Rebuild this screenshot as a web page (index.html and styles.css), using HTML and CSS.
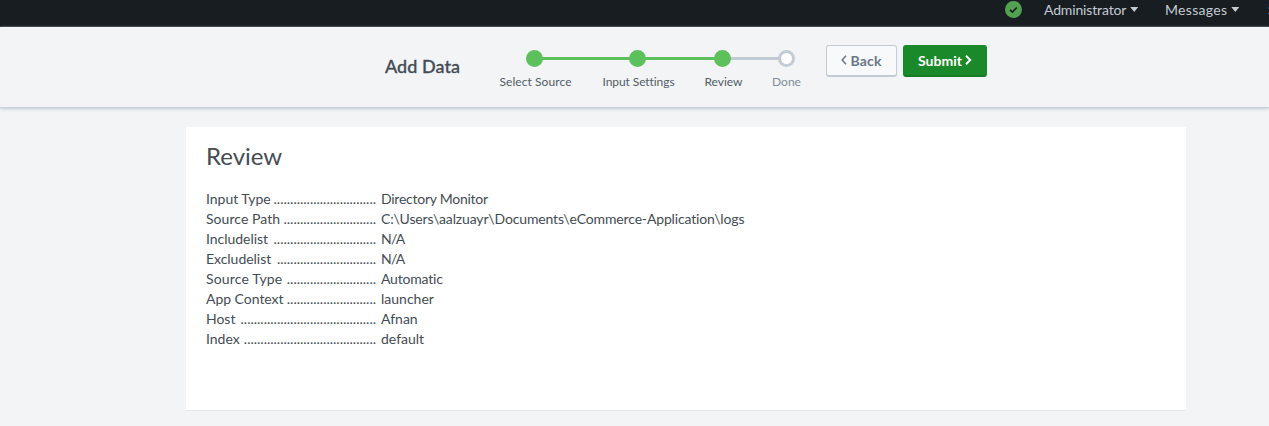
FILE: index.html
```html
<!DOCTYPE html>
<html lang="en">
<head>
<meta charset="utf-8">
<title>Add Data</title>
<link rel="stylesheet" href="styles.css">
</head>
<body>
<nav class="topbar">
  <svg class="health" width="17" height="17" viewBox="0 0 17 17"><circle cx="8.5" cy="8.5" r="8.5" fill="#53a051"/><path d="M5 8.8l2.4 2.3 4.4-4.6" fill="none" stroke="#171d21" stroke-width="1.7"/></svg>
  <a class="menu admin"><span>Administrator</span><i class="caret"></i></a>
  <a class="menu messages"><span>Messages</span><i class="caret"></i></a>
  <a class="menu settings"><span>Settings</span></a>
</nav>
<header class="wizard">
  <h1 class="title">Add Data</h1>
  <ol class="steps">
    <li class="step s1 done"><i class="dot"></i><span>Select Source</span></li>
    <li class="step s2 done"><i class="dot"></i><span>Input Settings</span></li>
    <li class="step s3 done"><i class="dot"></i><span>Review</span></li>
    <li class="step s4"><i class="dot"></i><span>Done</span></li>
  </ol>
  <button class="btn back"><svg width="6" height="10" viewBox="0 0 6 10"><path d="M5 .8L1.200 5 5 9.200" fill="none" stroke="currentColor" stroke-width="1.500"/></svg><span>Back</span></button>
  <button class="btn submit"><span>Submit</span><svg width="7" height="10" viewBox="0 0 7 10"><path d="M1 .8L5.200 5 1 9.200" fill="none" stroke="currentColor" stroke-width="2"/></svg></button>
</header>
<main class="card">
  <h2 class="heading">Review</h2>
  <dl class="list">
    <dt><span>Input Type</span><i>...............................</i></dt><dd class="monitor">Directory Monitor</dd>
    <dt><span class="path-label">Source Path</span><i>............................</i></dt><dd class="path">C:\Users\aalzuayr\Documents\eCommerce-Application\logs</dd>
    <dt><span>Includelist</span><i>...............................</i></dt><dd class="na">N/A</dd>
    <dt><span>Excludelist</span><i>..............................</i></dt><dd class="na">N/A</dd>
    <dt><span class="type-label">Source Type</span><i>...........................</i></dt><dd class="automatic">Automatic</dd>
    <dt><span>App Context</span><i>...........................</i></dt><dd>launcher</dd>
    <dt><span>Host</span><i>.........................................</i></dt><dd>Afnan</dd>
    <dt><span>Index</span><i>........................................</i></dt><dd>default</dd>
  </dl>
</main>
</body>
</html>
```
FILE: styles.css
```css
* { box-sizing: border-box; }
body { margin: 0; height: 426px; overflow: hidden; background: #f2f4f5; font-family: Lato, sans-serif; font-size: 14px; font-variant-ligatures: none; color: #444c55; }
.topbar { height: 27px; background: #171d21; border-bottom: 1px solid #2b3033; display: flex; padding-left: 1005px; color: #c3cbd4; overflow: hidden; white-space: nowrap; }
.health { margin-top: 1px; flex: none; }
.menu { display: flex; flex: none; line-height: 19px; }
.admin { margin-left: 22px; width: 121px; letter-spacing: -.15px; }
.messages { width: 103px; letter-spacing: .3px; }
.caret { width: 8px; height: 5px; margin: 7px 0 0 4px; background: currentColor; clip-path: polygon(0 0, 100% 0, 50% 100%); }
.wizard { position: relative; z-index: 0; height: 81px; background: #f2f4f5; border-bottom: 1px solid #c9d0d8; box-shadow: 0 1px 3px #c3cbd4; display: flex; padding-left: 385px; }
.title { margin: 27px 0 0; width: 114px; font-size: 18px; line-height: 24px; font-weight: 500; -webkit-text-stroke: .3px; letter-spacing: .05px; }
.steps { list-style: none; display: flex; margin: 23px 0 0; padding: 0; width: 327px; }
.step { display: flex; flex-direction: column; align-items: center; flex: none; font-size: 12px; line-height: 16px; color: #5c6773; white-space: nowrap; position: relative; }
.step.done { color: #535c67; }
.s1 { width: 73px; margin-right: 30px; letter-spacing: .08px; }
.s2 { width: 73px; margin-right: 29px; letter-spacing: -.08px; }
.s3 { width: 39px; margin-right: 29px; }
.s4 { width: 29px; }
.step.s4 { color: #818d99; }
.dot { width: 17px; height: 17px; border-radius: 50%; border: 3px solid #c3cbd4; background: #fff; margin-bottom: 7px; }
.done .dot { border-color: #5cc05c; background: #5cc05c; margin-right: 2px; }
.step::before { content: ""; position: absolute; top: 7px; left: calc(50% + 6px); height: 3px; background: #5cc05c; }
.s1::before { width: 90px; }
.s2::before { width: 72px; }
.step.s3::before { width: 51px; background: #c3cbd4; z-index: -1; }
.s4::before { display: none; }
.btn { margin: 18px 0 0; padding: 0 0 1px; height: 32px; border-radius: 3px; font: 700 14px Lato, sans-serif; display: flex; align-items: center; justify-content: center; gap: 3px; }
.back { width: 71px; border: 1px solid #c3cbd4; border-bottom-width: 2px; background: #f7f9fa; color: #6b7785; letter-spacing: .15px; }
.submit { width: 84px; margin-left: 6px; border: 1px solid #1a8929; border-bottom: 2px solid #157a23; background: #1a8929; color: #fff; }
.card { width: 1000px; height: 284px; margin: 19px 0 0 186px; padding: 14px 20px; background: #fff; border-bottom: 1px solid #e1e6eb; }
.heading { margin: 0; font-size: 24px; line-height: 30px; font-weight: 400; }
.list { margin: 18px 0 0; display: grid; grid-template-columns: 170px 1fr; column-gap: 5px; grid-auto-rows: 20px; line-height: 20px; }
dt { display: flex; justify-content: space-between; white-space: nowrap; letter-spacing: -.03px; }
dt i { font-style: normal; letter-spacing: 0; }
dd { margin: 0; white-space: nowrap; justify-self: start; }
.type-label { letter-spacing: .15px; }
.path-label { letter-spacing: .05px; }
.monitor { letter-spacing: -.25px; }
.path { letter-spacing: -.15px; }
.na { letter-spacing: -.7px; }
.automatic { letter-spacing: -.2px; }
```
